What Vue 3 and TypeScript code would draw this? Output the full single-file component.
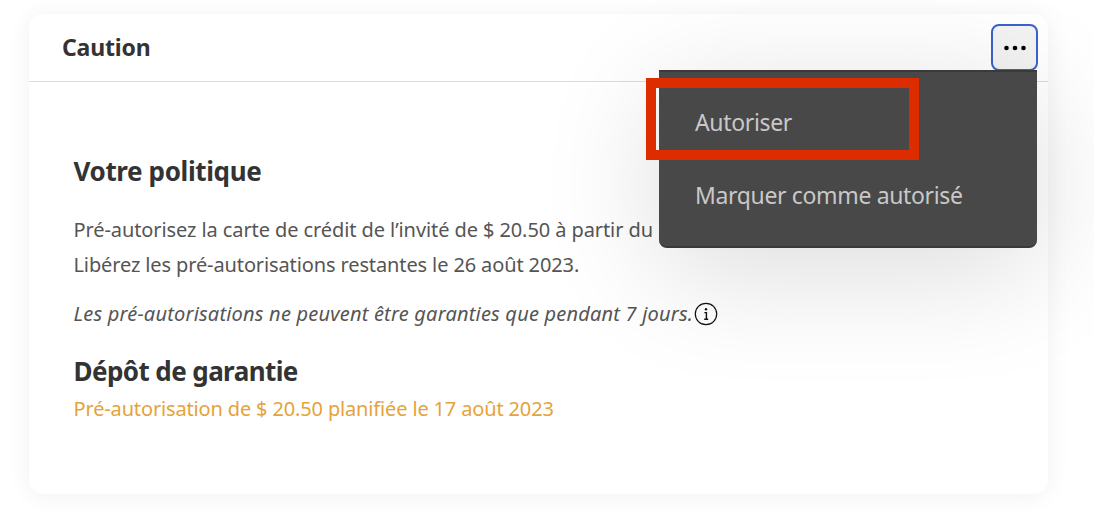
<script setup lang="ts">
const menuItems: string[] = ['Autoriser', 'Marquer comme autorisé']
</script>

<template>
  <div class="page">
    <section class="card">
      <header class="head">
        <h2 class="title">Caution</h2>
        <button class="more" type="button" aria-label="Plus">
          <svg width="24" height="6" viewBox="0 0 24 6"><circle cx="3.5" cy="3" r="2.3" /><circle cx="12" cy="3" r="2.3" /><circle cx="20.5" cy="3" r="2.3" /></svg>
        </button>
      </header>
      <div class="body">
        <h3 class="h1">Votre politique</h3>
        <p class="line first">Pré-autorisez la carte de crédit de l’invité de $ 20.50 à partir du 17 août 2023.</p>
        <p class="line">Libérez les pré-autorisations restantes le 26 août 2023.</p>
        <p class="note">
          <em>Les pré-autorisations ne peuvent être garanties que pendant 7 jours.</em>
          <svg class="info" width="24" height="24" viewBox="0 0 24 24" fill="none">
            <circle cx="12" cy="12" r="10.7" stroke="#111" stroke-width="1.2" />
            <path d="M10.4 10.6H12.4V17M10.2 17.2H14.2" stroke="#111" stroke-width="1.4" />
            <circle cx="12" cy="7.2" r="1.2" fill="#111" />
          </svg>
        </p>
        <h3 class="h2">Dépôt de garantie</h3>
        <p class="status">Pré-autorisation de $ 20.50 planifiée le 17 août 2023</p>
      </div>
      <ul class="menu">
        <li v-for="item in menuItems" :key="item">{{ item }}</li>
      </ul>
      <div class="mark"></div>
    </section>
  </div>
</template>

<style scoped>
.page {
  width: 1094px;
  height: 514px;
  box-sizing: border-box;
  padding: 14px 46px 20px 29px;
  background: #fff;
  font-family: "Noto Sans", "Open Sans", sans-serif;
  overflow: hidden;
}
.card {
  position: relative;
  height: 480px;
  background: #fff;
  border-radius: 14px;
  box-shadow: 0 2px 24px rgba(0, 0, 0, 0.06);
}
.head {
  height: 68px;
  box-sizing: border-box;
  border-bottom: 1px solid #dcdcdc;
  display: flex;
  align-items: flex-start;
  justify-content: space-between;
  padding: 10px 10px 0 33px;
}
.title {
  margin: 7px 0 0;
  font-size: 23px;
  line-height: 32px;
  font-weight: 700;
  color: #333;
  letter-spacing: -0.17px;
}
.more {
  width: 47px;
  height: 47px;
  box-sizing: border-box;
  padding: 0;
  border: 2.5px solid #3a62cc;
  border-radius: 8px;
  background: #f3f3f3;
  display: flex;
  align-items: center;
  justify-content: center;
}
.more svg { fill: #000; }
.body { padding: 71px 0 0 44.5px; }
.h1, .h2 {
  margin: 0;
  font-size: 26px;
  line-height: 36px;
  font-weight: 700;
  color: #333;
}
.h1 { letter-spacing: -0.37px; }
.h2 { letter-spacing: -0.58px; margin-top: 22px; }
.line {
  margin: 0;
  font-size: 20px;
  line-height: 35px;
  color: #555;
  letter-spacing: -0.12px;
  white-space: nowrap;
}
.first { margin-top: 23px; letter-spacing: -0.09px; }
.note {
  margin: 14px 0 0;
  display: flex;
  align-items: center;
  font-size: 20px;
  line-height: 35px;
  color: #555;
  letter-spacing: 0.2px;
}
.info { margin-left: 1px; flex: none; }
.status {
  margin: 5px 0 0;
  font-size: 20px;
  line-height: 30px;
  color: #e5a33a;
  letter-spacing: -0.15px;
}
.menu {
  position: absolute;
  left: 630px;
  top: 56px;
  width: 378px;
  height: 178px;
  box-sizing: border-box;
  margin: 0;
  padding: 14px 0 0;
  list-style: none;
  background: #484848;
  border-top: 2px solid #3a3a3a;
  border-bottom: 2px solid #3a3a3a;
  border-radius: 0 0 8px 8px;
  box-shadow: 0 24px 120px rgba(0, 0, 0, 0.14);
}
.menu li {
  height: 73px;
  line-height: 73px;
  padding-left: 36px;
  font-size: 23px;
  color: #c8c8c8;
  letter-spacing: -0.35px;
}
.mark {
  position: absolute;
  left: 617px;
  top: 64px;
  width: 273px;
  height: 82px;
  box-sizing: border-box;
  border: 10px solid #dc2c00;
}
</style>
